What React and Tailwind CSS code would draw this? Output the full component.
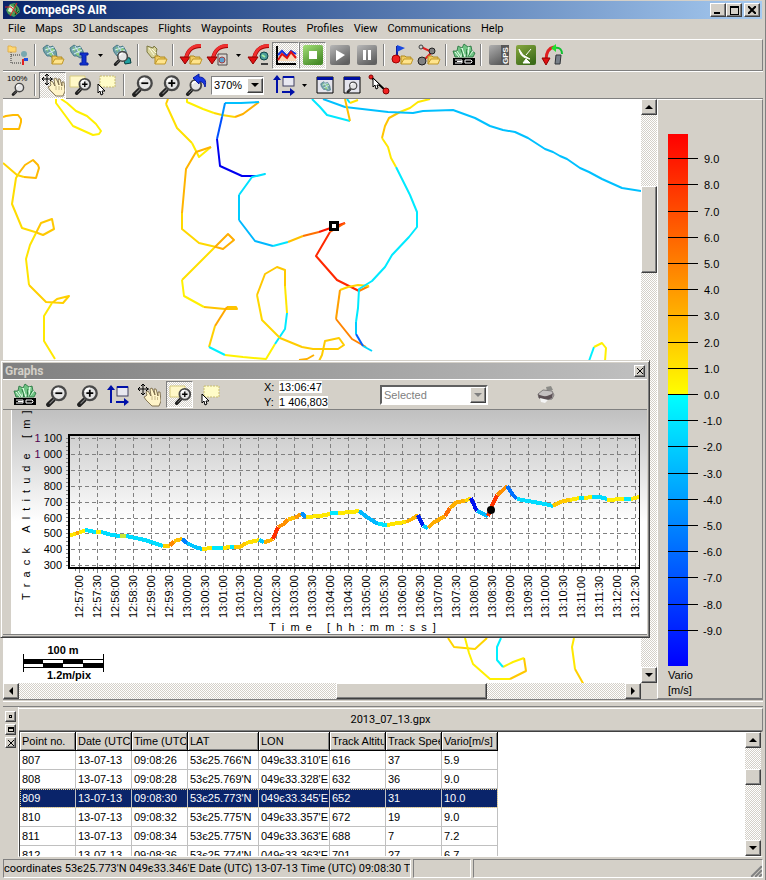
import { useState } from 'react'
import clsx from 'clsx'

const RAISED = 'border border-t-white border-l-white border-r-[#404040] border-b-[#404040] bg-[#d4d0c8] shadow-[inset_-1px_-1px_0_#808080]'
const CHECKER = 'bg-[repeating-conic-gradient(#ffffff_0_25%,#d4d0c8_0_50%)] bg-[length:2px_2px]'

const menus = ['File', 'Maps', '3D Landscapes', 'Flights', 'Waypoints', 'Routes', 'Profiles', 'View', 'Communications', 'Help']

// flight tracks on the map, one entry per vario colour
const mapTracks = [
  ['#ffbb00', '3,117 6,116 13,115 18,115 21,119 21,122 19,129 3,129'],
  ['#fff000', '56,99 56,103 73,126 93,135 99,134 101,131 96,124 87,116 76,111 67,103 61,99'],
  ['#ffd400', '3,163 17,175 24,177'],
  ['#ffb900', '24,177 36,178 39,168 38,165 33,160 25,165 19,173'],
  ['#ffdc00', '19,173 16,178 12,204 22,228 35,232'],
  ['#ffc800', '35,232 43,235 54,229 52,219 41,223 36,233'],
  ['#ffe400', '36,233 30,245 26,259 29,285'],
  ['#ffd000', '29,285 46,302 63,303 69,296 57,299 52,303'],
  ['#ffe800', '52,303 44,316 44,341 55,359'],
  ['#ffcc00', '168,99 166,104'],
  ['#ffe000', '166,104 177,128 192,143'],
  ['#ffee00', '192,143 199,157 211,147'],
  ['#ffb400', '211,147 196,152 186,169 182,213'],
  ['#ffd800', '182,213 182,229 199,243 216,247'],
  ['#ffae00', '216,247 223,249 234,240 228,234 214,248'],
  ['#ffe000', '214,248 204,258 182,280'],
  ['#fff000', '182,280 184,296 204,307'],
  ['#ffc400', '204,307 225,309 237,309 236,307 227,307'],
  ['#ffa800', '227,307 215,326'],
  ['#ffd000', '215,326 209,347'],
  ['#00f0ff', '209,347 225,355'],
  ['#fff200', '225,355 243,357 266,359 275,344'],
  ['#00eaff', '275,344 279,338 285,329 287,313'],
  ['#ffe600', '287,313 285,286'],
  ['#ffc800', '285,286 285,270 277,267 265,274 257,295'],
  ['#ffd800', '257,295 262,320 280,338'],
  ['#ffcc00', '280,338 302,347 313,349 338,349 344,345 339,338 325,341 322,355 319,361'],
  ['#ffb000', '299,360 307,359 314,355'],
  ['#fff000', '187,99 187,102 203,109 214,113'],
  ['#ffd800', '214,113 222,115 235,117'],
  ['#ffb000', '235,117 243,114 259,102'],
  ['#00c0ff', '259,102 241,103 225,103'],
  ['#0090ff', '225,103 222,117'],
  ['#0050ff', '222,117 217,139'],
  ['#0000f0', '217,139 220,166 242,176 257,176'],
  ['#00e0ff', '257,176 265,174 252,177 239,195'],
  ['#00ccff', '239,195 239,220'],
  ['#00b8ff', '239,220 255,241 273,246'],
  ['#00e4ff', '273,246 288,242'],
  ['#ffc000', '288,242 303,236'],
  ['#ff7000', '303,236 319,232'],
  ['#ff1800', '319,232 345,223'],
  ['#ff6000', '345,223 330,232'],
  ['#ff2800', '330,232 316,256 337,280 359,291'],
  ['#ff8000', '359,291 369,286'],
  ['#ffd400', '369,286 358,285 348,287 340,290'],
  ['#ffa000', '340,290 336,319'],
  ['#ff8400', '336,319 352,339 366,347'],
  ['#00d4ff', '372,351 363,346'],
  ['#0060ff', '363,346 356,334'],
  ['#00ccff', '356,334 356,322'],
  ['#00eaff', '356,322 358,308 359,289 372,281 385,267 392,255 409,237 417,227 417,212 410,195 396,167'],
  ['#ffe800', '396,167 391,158 388,147 382,138'],
  ['#ffc400', '382,138 385,126 389,118 400,112'],
  ['#ffe800', '400,112 410,108 418,102 430,99'],
  ['#00c0ff', '323,99 345,107 388,112 413,113 423,111 453,110 475,118 490,126 503,130 515,132 528,138 545,149 553,152 560,156 567,159 580,168 589,172 602,179 622,188 641,191'],
  ['#00e8ff', '312,99 320,107 327,115 350,121'],
  ['#ffc000', '350,121 345,99'],
  ['#00e8ff', '347,99 350,103'],
  ['#ffe400', '350,103 358,100'],
  ['#00f0ff', '589,361 594,347'],
  ['#fff000', '594,347 602,343 606,348 605,361'],
  ['#ffd400', '448,638 454,647 475,649 487,638'],
  ['#fff000', '465,638 469,653 473,664 490,679 510,679'],
  ['#ffc800', '510,679 526,671 524,658'],
  ['#fff000', '524,658 513,662 503,667'],
  ['#00f0ff', '503,667 497,660 497,647 501,638'],
  ['#ffe800', '574,638 572,647 575,669'],
  ['#ffd000', '575,669 584,685'],
]

// altitude profile, coloured by vario as well
const altitude = [
  ['#ffe400', '70,535 76,534'],
  ['#ffa800', '76,534 79,532'],
  ['#ffee00', '79,532 85,531'],
  ['#00e4ff', '85,530 96,532'],
  ['#ffee00', '96,532 101,532'],
  ['#00dcff', '101,532 112,535 120,536'],
  ['#c8e838', '120,536 126,536'],
  ['#00dcff', '126,536 145,540 154,543 163,546'],
  ['#ffd000', '163,546 170,546'],
  ['#ff8800', '170,546 174,541'],
  ['#ffc000', '174,541 182,539'],
  ['#0080ff', '182,539 187,543'],
  ['#00c4ff', '187,543 195,547 202,549'],
  ['#ffe400', '202,549 212,548'],
  ['#00e8ff', '212,548 223,548'],
  ['#ffe400', '223,548 230,547'],
  ['#00e8ff', '230,547 234,547'],
  ['#ffc800', '234,547 240,547 246,543'],
  ['#ffe000', '246,543 259,540'],
  ['#00ccff', '259,540 264,542'],
  ['#ffb000', '264,542 269,541 273,539'],
  ['#ff3000', '273,539 278,527'],
  ['#ff9000', '278,527 284,524 288,519'],
  ['#ffc000', '288,519 295,518'],
  ['#ff9c00', '295,518 301,514'],
  ['#0090ff', '301,513 306,517'],
  ['#ffe800', '306,517 320,516 330,514'],
  ['#00e8ff', '330,513 338,513'],
  ['#ffe800', '338,513 352,512 359,511'],
  ['#00b8ff', '359,511 367,517 378,524'],
  ['#00e4ff', '378,524 387,525'],
  ['#ffe400', '387,525 398,523 406,522'],
  ['#ffb400', '406,522 412,519 418,515'],
  ['#0020f0', '418,515 423,526'],
  ['#00ccff', '423,526 428,528'],
  ['#ffac00', '428,528 433,523 445,516'],
  ['#ff6c00', '445,516 450,508'],
  ['#ffb000', '450,508 457,502 465,501'],
  ['#ffd800', '465,501 471,498'],
  ['#0010f0', '471,498 474,505 477,511'],
  ['#00b8ff', '477,511 488,516'],
  ['#ff3400', '488,516 492,506 497,495'],
  ['#ff9000', '497,495 502,491 507,486'],
  ['#0070ff', '507,486 513,495 517,499'],
  ['#00dcff', '517,499 528,501 545,504 553,506'],
  ['#ffc800', '553,506 563,501 570,500'],
  ['#ffe800', '570,500 579,498'],
  ['#00e4ff', '579,498 584,498'],
  ['#ffe800', '584,498 592,497'],
  ['#00dcff', '592,497 600,497 607,499'],
  ['#ffee00', '607,500 624,499'],
  ['#00e8ff', '624,499 631,499'],
  ['#ffe800', '631,499 639,497'],
]

const times = Array.from({ length: 32 }, (_, i) => {
  const s = 12 * 3600 + 57 * 60 + i * 30
  const two = n => String(n).padStart(2, '0')
  return `${two(Math.floor(s / 3600))}:${two(Math.floor(s / 60) % 60)}:${two(s % 60)}`
})

const columns = [
  ['Point no.', 'w-[56px]'],
  ['Date (UTC)', 'w-[56px]'],
  ['Time (UTC)', 'w-[56px]'],
  ['LAT', 'w-[71px]'],
  ['LON', 'w-[71px]'],
  ['Track Altitude', 'w-[56px]'],
  ['Track Speed', 'w-[56px]'],
  ['Vario[m/s]', 'w-[56px]'],
]

const points = [
  ['807', '13-07-13', '09:08:26', "53є25.766'N", "049є33.310'E", '616', '37', '5.9'],
  ['808', '13-07-13', '09:08:28', "53є25.769'N", "049є33.328'E", '632', '36', '9.0'],
  ['809', '13-07-13', '09:08:30', "53є25.773'N", "049є33.345'E", '652', '31', '10.0'],
  ['810', '13-07-13', '09:08:32', "53є25.775'N", "049є33.357'E", '672', '19', '9.0'],
  ['811', '13-07-13', '09:08:34', "53є25.775'N", "049є33.363'E", '688', '7', '7.2'],
  ['812', '13-07-13', '09:08:36', "53є25.774'N", "049є33.363'E", '701', '27', '6.7'],
]

/* ---------- icon parts, all on a 24x24 grid ---------- */

function Folder({ x = 11, y = 12 }) {
  return (
    <g transform={`translate(${x} ${y})`}>
      <path d="M0 9V1h4l1 1h5v2" fill="#f0cc60" stroke="#b08a20" />
      <path d="M0 9l3-5h9l-2 5z" fill="#ffe48c" stroke="#c09828" />
    </g>
  )
}

function Globe({ x = 1, y = 1, s = 1 }) {
  return (
    <g transform={`translate(${x} ${y}) scale(${s})`}>
      <path d="M1 4l4-3 3 2 3-1 3 5 1 6-4 1-3-2-3 0-3-4z" fill="#6fa0a8" stroke="#4c7c88" />
      <path d="M4 3l3 2-2 3zM9 4l3 1 0 3-3-1zM6 9l3-1 2 3-2 1z" fill="#8fd07c" />
      <path d="M3 6l9-3M5 10l8-4M6 2l6 10" stroke="#d4ecf4" fill="none" />
    </g>
  )
}

function Lens({ x = 0, y = 0, s = 1, children }) {
  return (
    <g transform={`translate(${x} ${y}) scale(${s})`}>
      <path d="M7 14l-4 4" stroke="#202020" strokeWidth="4" strokeLinecap="round" />
      <path d="M9 12l-5 5" stroke="#808080" strokeWidth="1" />
      <circle cx="12" cy="8" r="6" fill="#e4e4e4" stroke="#484848" strokeWidth="2" />
      <path d="M8 7a4 4 0 0 1 4-3" stroke="#fff" strokeWidth="2" fill="none" />
      {children}
    </g>
  )
}

const minus = <path d="M9 8h6" stroke="#000" strokeWidth="1.5" />
const plus = <path d="M9 8h6M12 5v6" stroke="#000" strokeWidth="1.5" />

function Arc() {
  return (
    <g>
      <path d="M22 3c-9 0-13 4-15 12" fill="none" stroke="#a00000" strokeWidth="4" />
      <path d="M22 2.500c-9 0-13 4-15 12" fill="none" stroke="#f03030" strokeWidth="3" />
      <path d="M1 14h10l-5 7z" fill="#e01010" stroke="#900000" />
    </g>
  )
}

function Hand() {
  return (
    <g>
      <path d="M10 12l-1-3 2-1 3 5-1-7 2-1 3 7-1-6 2 0 2 7 0-4 2 0 1 9-2 5-7 0-6-6-2-3 2-1z" fill="#fff4c8" stroke="#6c5c38" strokeWidth="0.800" />
      <path d="M15 13v4M18 13v4M20.500 14v3" stroke="#b8a878" strokeWidth="0.800" />
      <path d="M6 1v11M1 6h11M4 3l2-2 2 2M4 10l2 2 2-2M3 4l-2 2 2 2M9 4l2 2-2 2" stroke="#000" fill="none" />
    </g>
  )
}

function Cursor({ x = 0, y = 0 }) {
  return <path transform={`translate(${x} ${y})`} d="M0 0v9l2-2 1 4 2-1-1-3h3z" fill="#fff" stroke="#000" />
}

function Swap() {
  return (
    <g stroke="#0010a8" fill="none" strokeWidth="2">
      <path d="M5 20V6M10 19h10" />
      <path d="M5 2l4 5H1zM23 19l-5-4v8z" fill="#0010a8" stroke="none" />
      <rect x="11" y="4" width="11" height="9" fill="#e8e8f0" stroke="#404060" strokeWidth="1" />
      <path d="M11 4h11" stroke="#0010a8" />
    </g>
  )
}

function Crystals() {
  return (
    <g>
      <path d="M3 14L1 8l4 0 1-5 4 2 2-4 4 3 3-1 1 5 3 2-2 4z" fill="#70c484" stroke="#207038" strokeWidth="0.800" />
      <path d="M5 8l4 6 1-9 3 9 4-10-1 10 5-6M3 9l4 5" stroke="#e4ffe8" fill="none" />
      <path d="M9 6l2 8M15 6l-1 8M19 8l-3 6" stroke="#207838" fill="none" />
      <rect x="1" y="15" width="22" height="7" fill="#000" />
      <path d="M3 17h7v3H3M5 18.500h5M13 17h6l1 1v1l-1 1h-6z" stroke="#fff" fill="none" strokeWidth="1" />
    </g>
  )
}

function Shiny({ from, to, children }) {
  const id = `shiny${from.slice(1)}`
  return (
    <g>
      <defs>
        <linearGradient id={id} x2="0.6" y2="1">
          <stop offset="0" stopColor={from} />
          <stop offset="1" stopColor={to} />
        </linearGradient>
      </defs>
      <rect x="2" y="2" width="20" height="20" rx="2" fill={`url(#${id})`} />
      {children}
    </g>
  )
}

const icons = {
  tree: (
    <g>
      <path d="M5 7v13h10M5 12h10" stroke="#303030" strokeDasharray="1 1" fill="none" />
      <path d="M2 3h3l1 1h4v5H2z" fill="#ffd870" stroke="#e0b050" />
      <circle cx="18" cy="11" r="3" fill="#78a8b0" />
      <path d="M21 16l-4 1v5" stroke="#e02020" strokeWidth="2" fill="none" />
      <path d="M18 15h4v3h-4z" fill="#2050e0" />
    </g>
  ),
  mapOpen: <g><Globe /><Folder /></g>,
  mapInfo: <g><Globe /><path d="M12 10h8v2h-2v8h2v2h-8v-2h2v-8h-2z" fill="#1030d0" stroke="#0820a0" /></g>,
  mapFind: <g><Globe x={3} y={1} /><path d="M14 14l7 1 1 5-6 1z" fill="#20a0a0" stroke="#084040" /><Lens x={4} y={7} s={0.8} /></g>,
  waypointOpen: <g><path d="M3 3l6 2 1-2 3 3-1 4 2 4-6 1-5-6z" fill="#d8d49c" stroke="#7c7840" /><path d="M5 5l5 7M8 6l4 4" stroke="#fffce0" /><Folder /></g>,
  trackOpen: <g><Arc /><Folder /></g>,
  trackSave: <g><Arc /><path d="M12 11h9v11h-9z" fill="#d8d4d0" stroke="#504848" /><circle cx="16" cy="17" r="3" fill="#60a0d0" stroke="#a04040" /></g>,
  trackFind: <g><Arc /><circle cx="17" cy="13" r="4" fill="#4c9c9c" stroke="#104848" /><path d="M15 12l3 2" stroke="#a0f0a0" strokeWidth="2" /><path d="M14 20h7v2h-7z" fill="#404040" /></g>,
  graph: (
    <g>
      <path d="M3 3v18h19" stroke="#000" strokeWidth="2" fill="none" />
      <path d="M4 18l4-6 5 3 4-6 5 3v6z" fill="#f8d8b8" />
      <path d="M4 12l4-4 5 5 4-5 5 3" stroke="#1030e0" strokeWidth="2" fill="none" />
      <path d="M4 17l4-6 5 4 4-6 5 6" stroke="#e01010" strokeWidth="2" fill="none" />
    </g>
  ),
  stop: <Shiny from="#a4e078" to="#488c28"><rect x="8" y="8" width="8" height="8" fill="#fff" /></Shiny>,
  play: <Shiny from="#b8b8b8" to="#606060"><path d="M8 7l9 5-9 6z" fill="#fff" /></Shiny>,
  pause: <Shiny from="#b9b9b9" to="#616161"><path d="M8 7h3v10H8zM13 7h3v10h-3z" fill="#fff" /></Shiny>,
  flagOpen: <g><path d="M7 3v12" stroke="#1020a0" strokeWidth="2" /><path d="M7 2l8 3-8 4z" fill="#1848e0" /><circle cx="6" cy="16" r="4" fill="#f02020" stroke="#a00000" /><Folder /></g>,
  routeOpen: (
    <g>
      <path d="M4 4l11 5-9 9" stroke="#e02020" strokeWidth="2" fill="none" />
      <circle cx="4" cy="4" r="2" fill="#d0d0d0" stroke="#404040" />
      <circle cx="15" cy="8" r="3" fill="#808080" stroke="#202020" />
      <circle cx="5" cy="18" r="4" fill="#808080" stroke="#202020" />
      <Folder />
    </g>
  ),
  crystals: <Crystals />,
  gps: (
    <Shiny from="#b0b0b0" to="#585858">
      <path d="M14 2h8v20h-8z" fill="#585858" />
      <text transform="translate(21 21) rotate(-90)" className="font-['Liberation_Sans'] text-[8px] font-bold" fill="#fff">GPS</text>
    </Shiny>
  ),
  dish: <Shiny from="#88a840" to="#3c6c18"><path d="M5 6c1 6 4 9 11 10L9 12zM9 20l3-4 4 4zM12 12l5-6" fill="#fff" stroke="#fff" /></Shiny>,
  live: (
    <g>
      <path d="M5 17C5 9 8 5 13 4" stroke="#e02020" strokeWidth="3" fill="none" />
      <path d="M1 15h8l-4 7z" fill="#e01010" stroke="#900000" />
      <path d="M14 5c5-1 7 2 7 6" stroke="#10c030" strokeWidth="2" fill="none" />
      <path d="M15 1v8l-5-4z" fill="#20e030" />
      <path d="M15 12l5 0-1 9-5 0z" fill="#788088" stroke="#303438" />
    </g>
  ),
  hundred: (
    <g>
      <text x="1" y="8" className="font-['Liberation_Sans'] text-[8px]" fill="#000">100%</text>
      <Lens x={5} y={9} s={0.7} />
    </g>
  ),
  hand: <Hand />,
  zoomBox: <g><path d="M2 3h15v11H2z" fill="#fff8c8" stroke="#d8cc80" /><Lens x={6} y={4} s={0.9}>{plus}</Lens></g>,
  selectBox: <g><path d="M5 3h15v11H5z" fill="#fffcc8" stroke="#c8bc70" strokeDasharray="2 1" /><Cursor x={3} y={11} /></g>,
  zoomOut: <Lens x={1} y={1} s={1.15}>{minus}</Lens>,
  zoomIn: <Lens x={1} y={1} s={1.15}>{plus}</Lens>,
  zoomBack: <g><Lens x={1} y={5} s={0.9} /><path d="M9 5l6-4v3c5 0 8 3 6 10-1-4-3-6-6-5v2z" fill="#1838e0" stroke="#0818a0" /></g>,
  swap: <Swap />,
  winMap: <g><path d="M4 4h16v16H4z" fill="#e4e4ec" stroke="#000" /><path d="M4 4h16v3H4z" fill="#0010a0" /><Globe x={7} y={8} s={0.7} /></g>,
  winLens: <g><path d="M4 4h16v16H4z" fill="#e4e4ec" stroke="#000" /><path d="M4 4h16v3H4z" fill="#0010a0" /><Lens x={6} y={8} s={0.6} /></g>,
  measure: <g><path d="M4 4l15 14" stroke="#000" strokeWidth="2" /><circle cx="4" cy="4" r="2" fill="#f02020" stroke="#800000" /><circle cx="19" cy="18" r="3" fill="#f02020" stroke="#800000" /><Cursor x={6} y={5} /></g>,
  printer: (
    <g>
      <path d="M12 4l5-1 2 4-6 1z" fill="#8c8c88" />
      <path d="M4 11l5-4 9 1 2 4-2 4-8 1-5-2z" fill="#c4c0c0" stroke="#807c7c" />
      <path d="M4 11c5 3 10 3 15-1l-1 5c-4 2-9 2-13 0z" fill="#5c5054" />
      <path d="M6 15l8 2-3 3-4-1z" fill="#f4f4f4" />
    </g>
  ),
}

function ToolButton({ icon, label, pressed }) {
  return (
    <button
      aria-label={label}
      className={clsx(
        'flex h-[27px] w-[27px] shrink-0 items-center justify-center',
        pressed && `border border-t-[#808080] border-l-[#808080] border-r-white border-b-white ${CHECKER}`
      )}
    >
      <svg viewBox="0 0 24 24" className="h-6 w-6 shrink-0">{icons[icon]}</svg>
    </button>
  )
}

function Sep() {
  return (
    <div className="flex h-[22px] w-2 shrink-0 justify-center">
      <div className="w-[2px] border-l border-r border-l-[#808080] border-r-white" />
    </div>
  )
}

function DropArrow({ label }) {
  return (
    <button aria-label={label} className="flex h-[27px] w-3.5 shrink-0 items-center justify-center">
      <svg viewBox="0 0 5 3" className="h-[3px] w-[5px]"><path d="M0 0h5L2.500 3z" /></svg>
    </button>
  )
}

const arrows = {
  up: 'M0 6L4 2L8 6z',
  down: 'M0 2h8L4 6z',
  left: 'M2 4L6 0V8z',
  right: 'M6 4L2 0V8z',
}

function ScrollButton({ dir }) {
  return (
    <button aria-label={`Scroll ${dir}`} className={`flex h-4 w-4 shrink-0 items-center justify-center ${RAISED}`}>
      <svg viewBox="0 0 8 8" className="h-2 w-2"><path d={arrows[dir]} /></svg>
    </button>
  )
}

function TitleBar() {
  return (
    <div className="mx-[3px] mt-px flex h-[18px] shrink-0 items-center bg-gradient-to-r from-[#0a246a] to-[#a6caf0] px-[2px]">
      <svg viewBox="0 0 16 16" className="mr-[2px] h-4 w-4">
        <path d="M1 8l4-6 5-1 4 5 1 4-6 5-6-3z" fill="#4c9c58" />
        <path d="M5 3l4 3-2 5-4-2z" fill="#d8f0d8" />
        <path d="M9 2l3 5-2 6 4-4" stroke="#184c20" fill="none" />
        <path d="M0 5l6 0 6 7M12 1L5 14" stroke="#e02020" strokeWidth="1" fill="none" />
      </svg>
      <h1 className="flex-1 font-[Roboto] text-[12px] font-bold text-white">CompeGPS AIR</h1>
      <button aria-label="Minimize" className={`flex h-[14px] w-4 items-end justify-start pb-[2px] pl-[3px] ${RAISED}`}>
        <span className="h-[2px] w-1.5 bg-black" />
      </button>
      <button aria-label="Maximize" className={`flex h-[14px] w-4 items-center justify-center ${RAISED}`}>
        <span className="h-[9px] w-[9px] border border-t-2 border-black" />
      </button>
      <button aria-label="Close" className={`ml-[2px] flex h-[14px] w-4 items-center justify-center ${RAISED}`}>
        <svg viewBox="0 0 8 8" className="h-2 w-2"><path d="M0 0l8 8M8 0L0 8" stroke="#000" strokeWidth="2" /></svg>
      </button>
    </div>
  )
}

function ZoomSelect() {
  const [zoom, setZoom] = useState('370%')
  return (
    <div className="relative mr-1.5 ml-[2px] h-[19px] w-[53px] border border-t-[#808080] border-l-[#808080] border-r-white border-b-white">
      <select
        aria-label="Zoom"
        value={zoom}
        onChange={e => setZoom(e.target.value)}
        className="h-full w-full appearance-none bg-white pl-[2px] text-[11px] leading-none"
      >
        {['100%', '370%', '500%'].map(z => <option key={z}>{z}</option>)}
      </select>
      <div className={`pointer-events-none absolute top-px right-0 flex h-[15px] w-4 items-center justify-center ${RAISED}`}>
        <svg viewBox="0 0 8 8" className="h-2 w-2"><path d={arrows.down} /></svg>
      </div>
    </div>
  )
}

function MapView() {
  return (
    <div className="relative min-w-0 flex-1 overflow-hidden bg-white">
      <svg viewBox="3 99 638 584" preserveAspectRatio="xMinYMin slice" className="absolute inset-0 h-full w-full">
        <g fill="none" strokeWidth="2" strokeLinejoin="round">
          {mapTracks.map(([color, pts], i) => <polyline key={i} stroke={color} points={pts} />)}
        </g>
        <rect x="329" y="221" width="10" height="10" />
        <rect x="332" y="224" width="4" height="4" fill="#fff" />
        <g className="font-['Liberation_Sans'] text-[11px] font-bold" textAnchor="middle">
          <text x="63" y="654">100 m</text>
          <text x="69" y="679">1.2m/pix</text>
        </g>
        <path d="M23 659h81v9H23z" />
        <path d="M43 660h20v3H43zM83 660h20v3H83zM24 664h19v3H24zM63 664h20v3H63z" fill="#fff" />
        <path d="M23 654h1v18h-1zM103 654h1v18h-1z" />
      </svg>
    </div>
  )
}

function VarioScale() {
  const ticks = Array.from({ length: 19 }, (_, i) => 9 - i)
  return (
    <aside className="w-[106px] shrink-0 border border-t-white border-l-white border-r-[#808080] border-b-[#808080]">
      <svg viewBox="658 100 104 598" preserveAspectRatio="xMinYMin meet" className="h-full w-full font-['Liberation_Sans'] text-[11px]">
        <defs>
          <linearGradient id="climb" x2="0" y2="1">
            <stop offset="0" stopColor="#ff0000" />
            <stop offset="0.5" stopColor="#ff8000" />
            <stop offset="1" stopColor="#ffff00" />
          </linearGradient>
          <linearGradient id="sink" x2="0" y2="1">
            <stop offset="0" stopColor="#00ffff" />
            <stop offset="1" stopColor="#0000ff" />
          </linearGradient>
        </defs>
        <rect x="668" y="134" width="20" height="261" fill="url(#climb)" />
        <rect x="668" y="395" width="20" height="271" fill="url(#sink)" />
        {ticks.map(t => {
          const y = Math.round(394 - t * 26.2)
          return (
            <g key={t}>
              <rect x="668" y={y} width="30" height="1" />
              <text x={t < 0 ? 703 : 704} y={y + 5}>{t.toFixed(1)}</text>
            </g>
          )
        })}
        <text x="668" y="679">Vario</text>
        <text x="668" y="694">[m/s]</text>
      </svg>
    </aside>
  )
}

// the axis titles are written with two blanks between the letters
const spaced = text => text.split('').join('\u00a0\u00a0').replace(/ /g, '\u00a0')

function AltitudeChart() {
  return (
    <svg viewBox="12 410 635 224" className="ml-2 h-[224px] border-l border-white font-['Liberation_Sans'] text-[11px]">
      <defs>
        <linearGradient id="sky" x2="0" y2="1">
          <stop offset="0" stopColor="#c0c0c0" />
          <stop offset="0.5" stopColor="#ffffff" />
        </linearGradient>
      </defs>
      <rect x="12" y="410" width="635" height="224" fill="url(#sky)" />
      <g stroke="#808080" strokeDasharray="4 3" shapeRendering="crispEdges">
        {times.map((t, i) => {
          const x = Math.round(79 + i * 17.94)
          return <path key={t} d={`M${x} 437v131`} />
        })}
        {Array.from({ length: 9 }, (_, i) => {
          const y = Math.round(438 + i * 15.9)
          return <path key={i} d={`M71 ${y}h568`} />
        })}
      </g>
      <g stroke="#808080" shapeRendering="crispEdges">
        {Array.from({ length: 124 }, (_, i) => {
          const x = Math.round(75 + i * 4.485)
          return <path key={i} d={`M${x} 569v2`} />
        })}
        {times.map((t, i) => <path key={t} d={`M${Math.round(79 + i * 17.94)} 569v4`} />)}
        {Array.from({ length: 33 }, (_, i) => <path key={i} d={`M66 ${Math.round(438 + i * 3.97)}h2`} />)}
      </g>
      <g fill="none" strokeWidth="4" shapeRendering="crispEdges">
        {altitude.map(([color, pts], i) => <polyline key={i} stroke={color} points={pts} />)}
      </g>
      <g shapeRendering="crispEdges">
        <path d="M68 434h572v2H68zM68 567h572v2H68zM68 434h2v135h-2zM639 434h1v135h-1z" />
      </g>
      <circle cx="491" cy="510" r="4" />
      {Array.from({ length: 9 }, (_, i) => {
        const v = 1100 - i * 100
        return (
          <text key={v} x="62" y={Math.round(442 + i * 15.9)} textAnchor="end">
            {v >= 1000 && <tspan fill="#500050">1 </tspan>}
            {String(v).slice(-3)}
          </text>
        )
      })}
      {times.map((t, i) => (
        <text key={t} transform={`translate(${Math.round(83 + i * 17.94)} 618) rotate(-90)`}>{t}</text>
      ))}
      <text x="269" y="631">{spaced('Time [hh:mm:ss]')}</text>
      <text transform="translate(30 600) rotate(-90)">{spaced('Track Altitude [m]')}</text>
    </svg>
  )
}

function GraphWindow() {
  return (
    <section className="absolute top-[261px] left-0 w-[650px] border border-t-[#d4d0c8] border-l-[#d4d0c8] border-r-[#404040] border-b-[#404040] bg-[#d4d0c8] p-[2px] shadow-[inset_1px_1px_0_#fff,inset_-1px_-1px_0_#808080]">
      <div className="flex h-4 items-center bg-gradient-to-r from-[#808080] to-[#c0c0c0] px-[2px]">
        <h2 className="flex-1 font-[Roboto] text-[12px] font-bold text-[#d4d0c8]">Graphs</h2>
        <button aria-label="Close graphs" className={`flex h-3 w-[11px] items-center justify-center ${RAISED}`}>
          <svg viewBox="0 0 6 6" className="h-1.5 w-1.5"><path d="M0 0l6 6M6 0L0 6" stroke="#000" /></svg>
        </button>
      </div>
      <div className="flex h-[31px] items-center border-t border-b border-t-white border-b-[#808080] pl-2">
        <div className="flex gap-1">
          <ToolButton icon="crystals" label="3D view" />
          <ToolButton icon="zoomOut" label="Zoom out" />
          <ToolButton icon="zoomIn" label="Zoom in" />
          <ToolButton icon="swap" label="Axes" />
          <ToolButton icon="hand" label="Pan" />
          <ToolButton icon="zoomBox" label="Zoom window" pressed />
          <ToolButton icon="selectBox" label="Select" />
        </div>
        <dl className="ml-10 grid w-[116px] grid-cols-[15px_1fr] text-[11px] leading-[15px]">
          <dt>X:</dt>
          <dd><span className="bg-white">13:06:47</span></dd>
          <dt>Y:</dt>
          <dd><span className="bg-white">1 406,803</span></dd>
        </dl>
        <div className="relative h-5 w-[108px] border-2 border-t-[#606060] border-l-[#606060] border-r-white border-b-white">
          <select aria-label="Track" disabled className="h-full w-full appearance-none bg-white pl-[2px] text-[11px] leading-none text-[#808080] opacity-100">
            <option>Selected</option>
          </select>
          <div className={`absolute top-0 right-0 flex h-4 w-4 items-center justify-center ${RAISED}`}>
            <svg viewBox="0 0 8 8" className="h-2 w-2"><path d={arrows.down} fill="#808080" /></svg>
          </div>
        </div>
        <div className="ml-11"><ToolButton icon="printer" label="Print" /></div>
      </div>
      <AltitudeChart />
      <div className="h-px bg-[#808080]" />
    </section>
  )
}

function TrackTable() {
  const [selected, setSelected] = useState('809')
  return (
    <section className="mr-[2px] ml-[3px] flex h-[151px] shrink-0 border-t border-[#808080]">
      <div className="flex w-[15px] shrink-0 flex-col items-center gap-[2px] pt-1">
        <button aria-label="Dock" className={`flex h-[11px] w-[11px] items-center justify-center ${RAISED}`}><span className="h-[3px] w-[3px] border border-black" /></button>
        <button aria-label="Float" className={`flex h-[11px] w-[11px] items-center justify-center ${RAISED}`}><span className="h-[5px] w-1.5 border border-t-2 border-black" /></button>
        <button aria-label="Close panel" className={`flex h-[11px] w-[11px] items-center justify-center ${RAISED}`}>
          <svg viewBox="0 0 6 6" className="h-1.5 w-1.5"><path d="M0 0l6 6M6 0L0 6" stroke="#000" /></svg>
        </button>
      </div>
      <div className="flex min-w-0 flex-1 flex-col border-l border-white">
        <h2 className="mt-px h-[23px] border-t border-r border-b border-t-white border-r-[#808080] border-b-[#808080] text-center font-[Roboto] text-[11px] leading-[21px]">2013_07_13.gpx</h2>
        <div className="flex min-h-0 flex-1 border-t border-r-2 border-b border-l border-t-[#404040] border-r-[#d4d0c8] border-b-white border-l-[#404040] bg-white">
          <div className="min-w-0 flex-1 overflow-hidden">
            <table className="w-[478px] table-fixed border-separate border-spacing-0 text-[11px]">
              <thead>
                <tr>
                  {columns.map(([name, width]) => (
                    <th key={name} className={`h-[19px] border-r border-b border-black bg-[#d4d0c8] p-0 pr-px pl-[2px] text-left font-normal whitespace-nowrap shadow-[inset_1px_1px_0_#fff,inset_-1px_-1px_0_#808080] ${width}`}>
                      <div className="overflow-hidden">{name}</div>
                    </th>
                  ))}
                </tr>
              </thead>
              <tbody>
                {points.map(row => (
                  <tr
                    key={row[0]}
                    onClick={() => setSelected(row[0])}
                    className={clsx(row[0] === selected && 'bg-[#0a246a] text-white outline-1 -outline-offset-1 outline-[#f4db94] outline-dotted')}
                  >
                    {row.map((cell, i) => (
                      <td key={i} className="h-[19px] border-r border-b border-[#c0c0c0] p-0 pl-[2px] leading-[18px] whitespace-nowrap">{cell}</td>
                    ))}
                  </tr>
                ))}
              </tbody>
            </table>
          </div>
          <div className={`flex w-4 flex-col ${CHECKER}`}>
            <ScrollButton dir="up" />
            <div className="h-[21px]" />
            <div className={`h-4 ${RAISED}`} />
            <div className="flex-1" />
            <ScrollButton dir="down" />
          </div>
        </div>
      </div>
    </section>
  )
}

const SUNKEN = 'border border-t-[#808080] border-l-[#808080] border-r-white border-b-white'

export default function App() {
  return (
    <div className="flex h-screen flex-col overflow-hidden border-r border-[#808080] bg-[#d4d0c8] font-['Liberation_Sans',sans-serif] text-[11px] text-black">
      <TitleBar />
      <nav className="flex h-5 shrink-0 items-center pl-[3px] font-[Roboto] text-[11px]">
        {menus.map(m => <button key={m} className="px-[5px]">{m}</button>)}
      </nav>

      <div className="mr-[2px] ml-[3px] flex h-8 shrink-0 items-center border-t border-r border-b border-t-white border-r-[#808080] border-b-[#808080] pl-px">
        <ToolButton icon="tree" label="Data tree" />
        <Sep />
        <ToolButton icon="mapOpen" label="Open map" />
        <ToolButton icon="mapInfo" label="Map information" />
        <DropArrow label="Map options" />
        <ToolButton icon="mapFind" label="Find map" />
        <Sep />
        <ToolButton icon="waypointOpen" label="Open landscape" />
        <Sep />
        <ToolButton icon="trackOpen" label="Open track" />
        <ToolButton icon="trackSave" label="Save track" />
        <DropArrow label="Track options" />
        <ToolButton icon="trackFind" label="Find track" />
        <ToolButton icon="graph" label="Graphs" pressed />
        <ToolButton icon="stop" label="Stop" pressed />
        <ToolButton icon="play" label="Play" />
        <ToolButton icon="pause" label="Pause" />
        <Sep />
        <ToolButton icon="flagOpen" label="Open waypoints" />
        <ToolButton icon="routeOpen" label="Open route" />
        <Sep />
        <ToolButton icon="crystals" label="3D view" />
        <Sep />
        <ToolButton icon="gps" label="GPS" />
        <ToolButton icon="dish" label="Receive" />
        <ToolButton icon="live" label="Live tracking" />
      </div>

      <div className="mr-[2px] ml-[3px] flex h-7 shrink-0 items-center border-t border-b border-t-white border-b-[#808080] pl-px">
        <ToolButton icon="hundred" label="Zoom 100%" />
        <Sep />
        <ToolButton icon="hand" label="Pan" pressed />
        <ToolButton icon="zoomBox" label="Zoom window" />
        <ToolButton icon="selectBox" label="Select" />
        <Sep />
        <ToolButton icon="zoomOut" label="Zoom out" />
        <ToolButton icon="zoomIn" label="Zoom in" />
        <ToolButton icon="zoomBack" label="Previous zoom" />
        <ZoomSelect />
        <ToolButton icon="swap" label="Rotate" />
        <DropArrow label="Rotate options" />
        <ToolButton icon="winMap" label="Map window" />
        <ToolButton icon="winLens" label="Lens window" />
        <ToolButton icon="measure" label="Measure" />
      </div>

      <main className="relative flex min-h-0 flex-1 pr-[2px] pl-[3px]">
        <div className="flex min-w-0 flex-1 flex-col">
          <div className="flex min-h-0 flex-1">
            <MapView />
            <div className={`flex w-4 shrink-0 flex-col ${CHECKER}`}>
              <ScrollButton dir="up" />
              <div className="h-[71px]" />
              <div className={`h-[87px] ${RAISED}`} />
              <div className="flex-1" />
              <ScrollButton dir="down" />
            </div>
          </div>
          <div className="flex h-4 shrink-0">
            <div className={`flex flex-1 ${CHECKER}`}>
              <ScrollButton dir="left" />
              <div className="flex-[318]" />
              <div className={`flex-[150] ${RAISED}`} />
              <div className="flex-[138]" />
              <ScrollButton dir="right" />
            </div>
            <div className="w-4" />
          </div>
        </div>
        <VarioScale />
        <GraphWindow />
      </main>

      <div className="mr-[2px] ml-[3px] h-[7px] shrink-0 border-t border-[#808080] pt-px">
        <div className="h-px bg-white" />
      </div>
      <TrackTable />

      <footer className="flex h-[23px] shrink-0 gap-[2px] pt-[2px] pr-[2px] pb-[2px] pl-[3px] font-[Roboto] text-[11px] leading-[17px]">
        <div className={`w-[408px] overflow-hidden whitespace-nowrap ${SUNKEN}`}>
          coordinates 53є25.773'N 049є33.346'E Date (UTC) 13-07-13 Time (UTC) 09:08:30 Tr
        </div>
        <div className={`w-[58px] ${SUNKEN}`} />
        <div className={`flex flex-1 items-end justify-end ${SUNKEN}`}>
          <svg viewBox="0 0 12 12" className="h-3 w-3">
            <path d="M0 12L12 0M4 12l8-8M8 12l4-4" stroke="#fff" />
            <path d="M1 12L12 1M5 12l7-7M9 12l3-3" stroke="#808080" strokeWidth="2" />
          </svg>
        </div>
      </footer>
    </div>
  )
}
